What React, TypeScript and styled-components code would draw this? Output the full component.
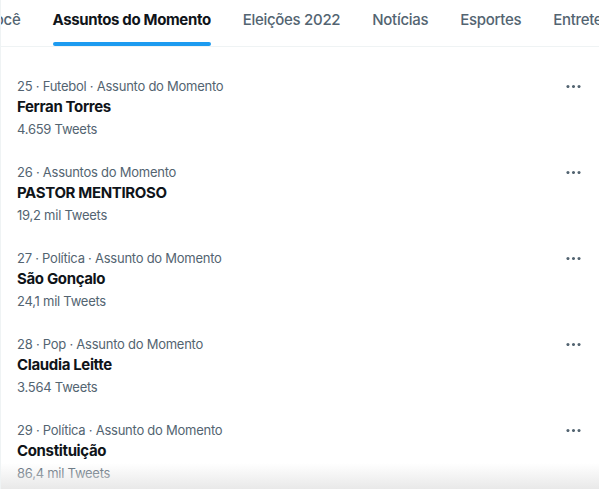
import React, { useLayoutEffect, useRef } from "react";
import styled, { createGlobalStyle } from "styled-components";

const GlobalStyle = createGlobalStyle`
  html, body {
    margin: 0;
    padding: 0;
    background: #ffffff;
  }

  body {
    font-family: "Inter", "Liberation Sans", sans-serif;
    color: #0f1419;
    -webkit-font-smoothing: antialiased;
  }
`;

const Page = styled.div`
  width: 599px;
  height: 489px;
  overflow: hidden;
  box-sizing: border-box;
  border-left: 1px solid #eff3f4;
  background: #ffffff;
  position: relative;
`;

const TabBar = styled.div`
  height: 46px;
  border-bottom: 1px solid #eff3f4;
  display: flex;
  flex-direction: row;
  overflow-x: auto;
  scrollbar-width: none;

  &::-webkit-scrollbar {
    display: none;
  }
`;

const Tab = styled.div`
  flex: 0 0 auto;
  height: 100%;
  padding: 0 16px;
  display: flex;
  align-items: center;
  justify-content: center;
`;

const TabLabel = styled.span<{ $active?: boolean }>`
  position: relative;
  height: 100%;
  display: flex;
  align-items: center;

  font-size: 15px;
  font-weight: ${({ $active }) => ($active ? 700 : 500)};
  letter-spacing: ${({ $active }) => ($active ? "-0.35px" : "-0.3px")};
  color: ${({ $active }) => ($active ? "#0f1419" : "#536471")};
  white-space: nowrap;
  padding-bottom: 7px;
  box-sizing: border-box;
`;

const Indicator = styled.div`
  position: absolute;
  left: 0;
  right: 0;
  bottom: 0;
  height: 4px;
  border-radius: 9999px;
  background: #1d9bf0;
`;

const List = styled.div`
  padding-top: 18px;
  display: flex;
  flex-direction: column;
`;

const TrendRow = styled.div`
  height: 86px;
  box-sizing: border-box;
  padding: 11px 16px 11px 16px;
  display: flex;
  flex-direction: row;
  align-items: flex-start;
  justify-content: space-between;
`;

const TrendText = styled.div`
  display: flex;
  flex-direction: column;
`;

const Meta = styled.div`
  font-size: 13px;
  line-height: 20px;
  letter-spacing: -0.25px;
  color: #536471;
  white-space: nowrap;
`;

const Title = styled.div`
  font-size: 15px;
  font-weight: 700;
  line-height: 22px;
  letter-spacing: -0.35px;
  color: #0f1419;
`;

const Count = styled.div`
  font-size: 13px;
  line-height: 22px;
  letter-spacing: -0.25px;
  color: #536471;
`;

const MoreButton = styled.div`
  width: 19px;
  height: 19px;
  margin-top: 1px;
  color: #536471;
  display: flex;
  align-items: center;
  justify-content: center;

  svg {
    width: 19px;
    height: 19px;
    fill: currentColor;
  }
`;

const BottomFade = styled.div`
  position: absolute;
  left: 0;
  right: 0;
  bottom: 0;
  height: 26px;
  pointer-events: none;
  background: linear-gradient(
    to bottom,
    rgba(230, 230, 230, 0) 0%,
    rgba(230, 230, 230, 0.9) 100%
  );
`;

const tabs = [
  "Para você",
  "Assuntos do Momento",
  "Eleições 2022",
  "Notícias",
  "Esportes",
  "Entretenimento",
];

const trends = [
  { rank: 25, category: "Futebol · Assunto do Momento", title: "Ferran Torres", count: "4.659 Tweets" },
  { rank: 26, category: "Assuntos do Momento", title: "PASTOR MENTIROSO", count: "19,2 mil Tweets" },
  { rank: 27, category: "Política · Assunto do Momento", title: "São Gonçalo", count: "24,1 mil Tweets" },
  { rank: 28, category: "Pop · Assunto do Momento", title: "Claudia Leitte", count: "3.564 Tweets" },
  { rank: 29, category: "Política · Assunto do Momento", title: "Constituição", count: "86,4 mil Tweets" },
];

const MoreIcon = () => (
  <svg viewBox="0 0 24 24" aria-hidden="true">
    <path d="M3 12c0-1.1.9-2 2-2s2 .9 2 2-.9 2-2 2-2-.9-2-2zm9 2c1.1 0 2-.9 2-2s-.9-2-2-2-2 .9-2 2 .9 2 2 2zm7 0c1.1 0 2-.9 2-2s-.9-2-2-2-2 .9-2 2 .9 2 2 2z" />
  </svg>
);

const App = () => {
  const barRef = useRef<HTMLDivElement>(null);
  const activeRef = useRef<HTMLSpanElement>(null);

  // scroll the tab strip so the active label sits where the screenshot has it
  useLayoutEffect(() => {
    if (barRef.current && activeRef.current) {
      barRef.current.scrollLeft = activeRef.current.offsetLeft - 52;
    }
  }, []);

  return (
    <>
      <GlobalStyle />
      <Page>
        <TabBar ref={barRef}>
          {tabs.map((label) => {
            const active = label === "Assuntos do Momento";
            return (
              <Tab key={label}>
                <TabLabel $active={active} ref={active ? activeRef : undefined}>
                  {label}
                  {active && <Indicator />}
                </TabLabel>
              </Tab>
            );
          })}
        </TabBar>
        <List>
          {trends.map((t) => (
            <TrendRow key={t.rank}>
              <TrendText>
                <Meta>
                  {t.rank} · {t.category}
                </Meta>
                <Title>{t.title}</Title>
                <Count>{t.count}</Count>
              </TrendText>
              <MoreButton>
                <MoreIcon />
              </MoreButton>
            </TrendRow>
          ))}
        </List>
        <BottomFade />
      </Page>
    </>
  );
};

export default App;
